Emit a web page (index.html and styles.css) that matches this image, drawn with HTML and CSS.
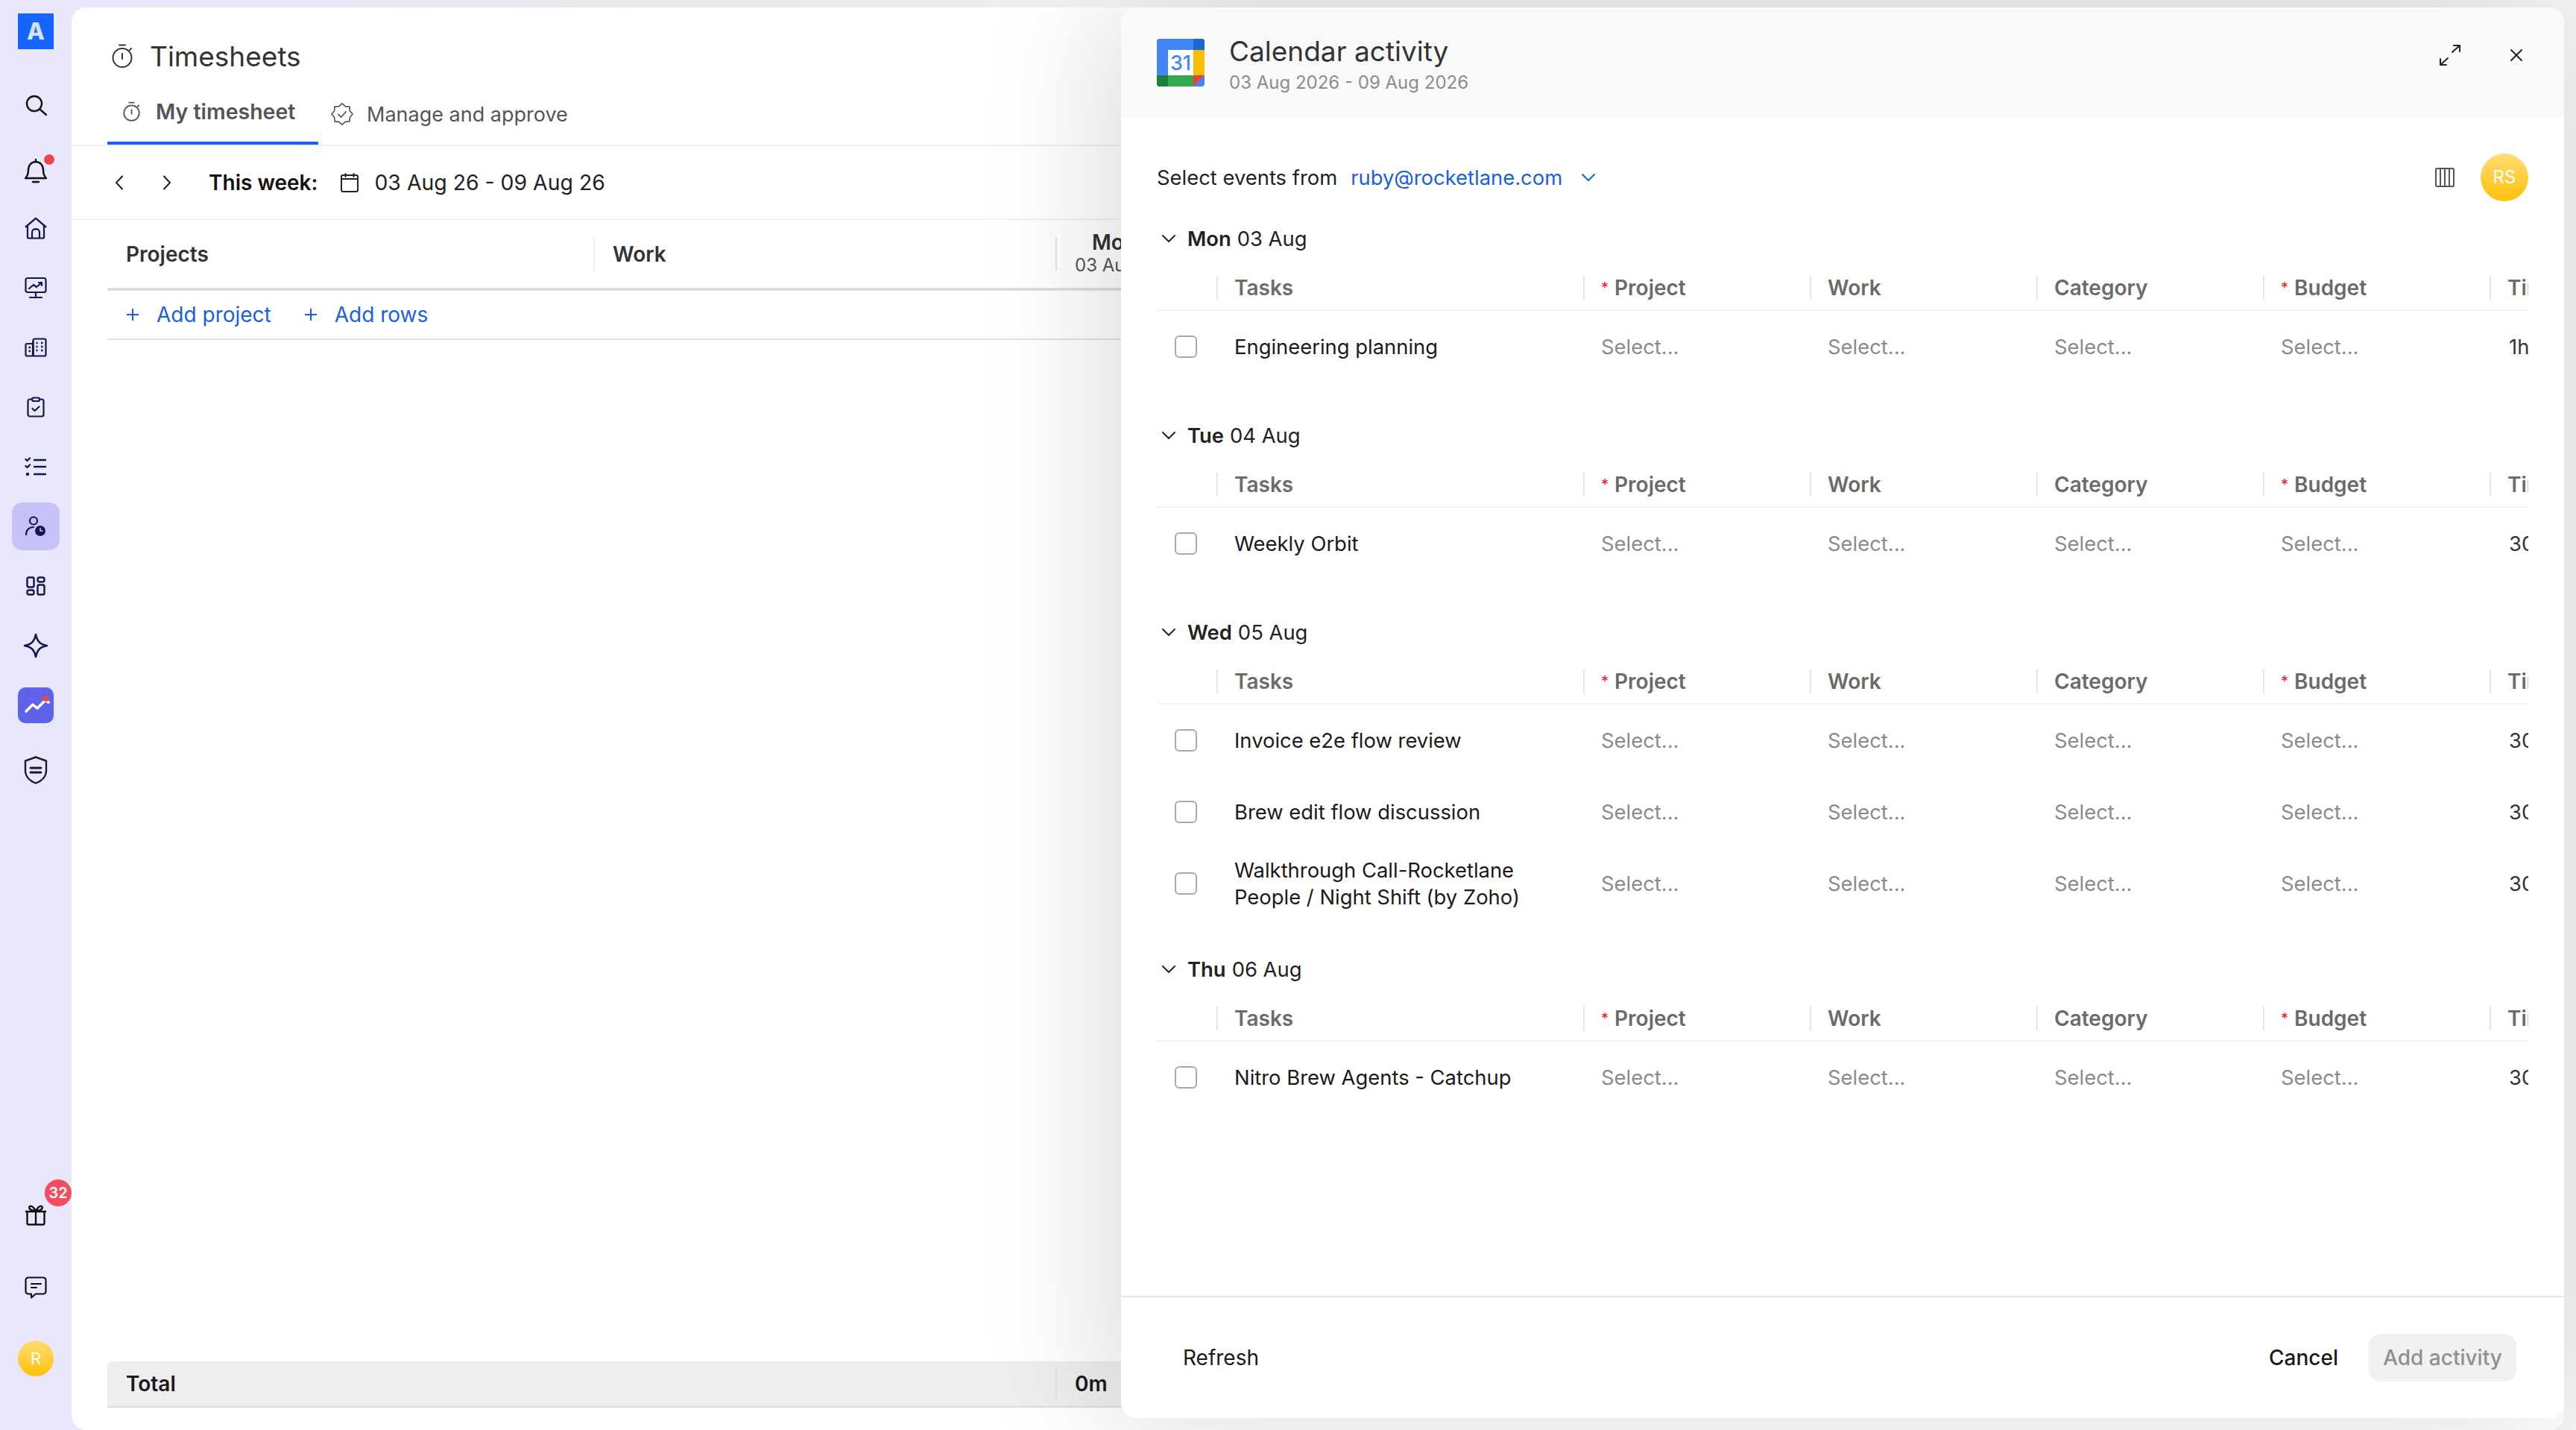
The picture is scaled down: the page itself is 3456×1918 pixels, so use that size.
FILE: index.html
```html
<!DOCTYPE html>
<html lang="en">
<head>
    <meta charset="UTF-8">
    <title>Timesheets</title>
    <link rel="stylesheet" href="styles.css">
</head>
<body>
<div class="app">
    <aside class="sidebar">
        <div class="logo">A</div>
        <div class="nav-item nav-search">
            <svg width="32" height="32" viewBox="0 0 32 32" fill="none" stroke="#111" stroke-width="2.4" stroke-linecap="round"><circle cx="14" cy="14" r="10"/><path d="M22 22l8 7"/></svg>
        </div>
        <div class="nav-item nav-bell">
            <svg width="32" height="34" viewBox="0 0 32 34" fill="none" stroke="#111" stroke-width="2.4" stroke-linejoin="round" stroke-linecap="round"><path d="M2 27c3-3 4-6 4-11 0-6 4-11 10-11s10 5 10 11c0 5 1 8 4 11z"/><path d="M16 2v3M12 32h8"/></svg>
            <span class="dot"></span>
        </div>
        <div class="nav-item nav-home">
            <svg width="30" height="24" viewBox="0 0 30 24" transform="scale(1 1.2)" fill="none" stroke="#16134f" stroke-width="2.2" stroke-linejoin="round"><path d="M1 11L15 1l14 10"/><path d="M4 9v13a1.500 1.500 0 0 0 2 1.500h18a1.500 1.500 0 0 0 2-1.500V9"/><path d="M10 23v-6a4 4 0 0 1 4-4h2a4 4 0 0 1 4 4v6"/></svg>
        </div>
        <div class="nav-item">
            <svg width="30" height="30" viewBox="0 0 30 30" fill="none" stroke="#16134f" stroke-width="2.2" stroke-linecap="round" stroke-linejoin="round"><rect x="1.500" y="2" width="27" height="19" rx="2.500"/><path d="M6 16l6-5 4 3 7-6M19 8h4v4M15 21v7M7 28h16"/></svg>
        </div>
        <div class="nav-item">
            <svg width="30" height="26" viewBox="0 0 30 26" fill="none" stroke="#16134f" stroke-width="2.2" stroke-linejoin="round"><path d="M11 24V7a1.500 1.500 0 0 1 1.500-1.500"/><rect x="1.500" y="8" width="10" height="16.500" rx="2"/><rect x="11.500" y="1.500" width="17" height="23" rx="2"/><path d="M5.500 13h2.500M5.500 18h2.500M15.500 7h2M15.500 12h2M15.500 17h2M22 7h2.500M22 12h2.500M22 17h2.500" stroke-width="2.600"/></svg>
        </div>
        <div class="nav-item">
            <svg width="24" height="28" viewBox="0 0 24 28" fill="none" stroke="#16134f" stroke-width="2.2" stroke-linecap="round" stroke-linejoin="round"><rect x="1.500" y="3.500" width="21" height="23" rx="2.500"/><rect x="7" y="1.500" width="10" height="4.500" rx="2" fill="#e9e7fb"/><path d="M7.500 16l3 3 6-5.500"/></svg>
        </div>
        <div class="nav-item">
            <svg width="30" height="26" viewBox="0 0 30 26" fill="none" stroke="#16134f" stroke-width="2.4" stroke-linecap="round" stroke-linejoin="round"><path d="M1.500 3l2 2 3.500-3.500M1.500 12l2 2 3.500-3.500M13 4h15M13 13h15M13 23h15"/><circle cx="4" cy="23" r="1" fill="#16134f"/></svg>
        </div>
        <div class="nav-item nav-active">
            <svg width="28" height="28" viewBox="0 0 28 28" fill="none" stroke="#16134f" stroke-width="2.200" stroke-linecap="round"><circle cx="11" cy="6.500" r="5"/><path d="M1 25c0-6 4-10 10-10"/><circle cx="20" cy="20" r="7" fill="#16134f" stroke="none"/><path d="M20 16.500V20h3" stroke="#c5c2fa" stroke-width="1.600"/></svg>
        </div>
        <div class="nav-item">
            <svg width="26" height="26" viewBox="0 0 26 26" fill="none" stroke="#16134f" stroke-width="2.400"><rect x="1.500" y="1.500" width="9" height="13" rx="2"/><rect x="15.500" y="1.500" width="9" height="6" rx="2.500"/><rect x="1.500" y="18.500" width="9" height="6" rx="2.500"/><rect x="15.500" y="11.500" width="9" height="13" rx="2"/></svg>
        </div>
        <div class="nav-item">
            <svg width="34" height="34" viewBox="0 0 34 34" fill="none" stroke="#16134f" stroke-width="2.600" stroke-linejoin="round"><path d="M17 2c2 9 5 13 15 15-10 2-13 6-15 15-2-9-5-13-15-15 10-2 13-6 15-15z"/></svg>
        </div>
        <div class="nav-item">
            <div class="chart-tile">
                <svg width="48" height="48" viewBox="0 0 48 48" fill="none"><path d="M11 32l9-9 6 5 11-11 4 3" stroke="#fff" stroke-width="3.500" stroke-linecap="round" stroke-linejoin="round"/><circle cx="37.500" cy="15" r="4" fill="#f0434f"/></svg>
            </div>
        </div>
        <div class="nav-item nav-shield">
            <svg width="32" height="38" viewBox="0 0 32 38" fill="none" stroke="#1a1a2a" stroke-width="2.400" stroke-linejoin="round" stroke-linecap="round"><path d="M16 1.500l14 5v13c0 8-6 14-14 17-8-3-14-9-14-17v-13z"/><path d="M9 16h14M9 22h14" stroke-width="2.800"/></svg>
        </div>

        <div class="nav-item nav-gift">
            <svg width="30" height="28" viewBox="0 0 30 28" fill="none" stroke="#111" stroke-width="2.400" stroke-linejoin="round"><path d="M1 9h28M3.500 9v16a1.500 1.500 0 0 0 1.500 1.500h20a1.500 1.500 0 0 0 1.500-1.500V9M15 8v18"/><path d="M15 8C12 3 9 1 7 2s-1 6 8 6zm0 0c3-5 6-7 8-6s1 6-8 6z"/></svg>
            <span class="badge">32</span>
        </div>
        <div class="nav-item nav-chat">
            <svg width="30" height="30" viewBox="0 0 30 30" fill="none" stroke="#111" stroke-width="2.200" stroke-linejoin="round" stroke-linecap="round"><path d="M5 1.500h20a3.500 3.500 0 0 1 3.500 3.500v15a3.500 3.500 0 0 1-3.500 3.500H15l-6 5v-5H5A3.500 3.500 0 0 1 1.500 20V5A3.500 3.500 0 0 1 5 1.500z"/><path d="M9 10h13M9 15h7"/></svg>
        </div>
        <div class="nav-item nav-user"><span class="avatar avatar-sm">R</span></div>
    </aside>

    <main class="page">
        <div class="page-title">
            <svg width="28" height="32" viewBox="0 0 28 32" fill="none" stroke="#333" stroke-width="2" stroke-linecap="round"><circle cx="14" cy="18.500" r="12.500"/><path d="M10 1.500h8M14 13v7M24 8l2 -2"/></svg>
            <h1>Timesheets</h1>
        </div>
        <div class="tabs">
            <div class="tab tab-active">
                <svg width="23" height="27" viewBox="0 0 28 32" fill="none" stroke="#555" stroke-width="2.200" stroke-linecap="round"><circle cx="14" cy="18.500" r="12.500"/><path d="M10 1.500h8M14 13v7M24 8l2 -2"/></svg>
                My timesheet
            </div>
            <div class="tab">
                <svg width="30" height="32" viewBox="0 0 32 32" fill="none" stroke="#555" stroke-width="1.800" stroke-linejoin="round" stroke-linecap="round"><polygon points="16,1 20.600,4.900 26.600,5.400 27.100,11.400 31,16 27.100,20.600 26.600,26.600 20.600,27.100 16,31 11.400,27.100 5.400,26.600 4.900,20.600 1,16 4.900,11.400 5.400,5.400 11.400,4.900"/><path d="M10.500 16.500l4 4 7-8"/></svg>
                Manage and approve
            </div>
        </div>
        <div class="week-bar">
            <svg class="week-prev" width="12" height="20" viewBox="0 0 12 20" fill="none" stroke="#222" stroke-width="2" stroke-linecap="round" stroke-linejoin="round"><path d="M10 1.500L2 10l8 8.500"/></svg>
            <svg class="week-next" width="12" height="20" viewBox="0 0 12 20" fill="none" stroke="#222" stroke-width="2" stroke-linecap="round" stroke-linejoin="round"><path d="M2 1.500l8 8.500-8 8.500"/></svg>
            <strong class="week-label">This week:</strong>
            <svg width="24" height="26" viewBox="0 0 24 26" fill="none" stroke="#222" stroke-width="2" stroke-linecap="round"><rect x="1" y="3" width="22" height="22" rx="2"/><path d="M1 8h22M6.500 1v4M17.500 1v4"/></svg>
            <span class="week-range">03 Aug 26 - 09 Aug 26</span>
        </div>
        <div class="ts-table">
            <div class="ts-head">
                <div class="ts-col-project">Projects</div>
                <div class="ts-col-work">Work</div>
                <div class="ts-col-day"><b>Mon</b><small>03 Aug</small></div>
            </div>
            <div class="ts-add">
                <span class="add-link"><i class="plus"></i>Add project</span>
                <span class="add-link"><i class="plus"></i>Add rows</span>
            </div>
        </div>
        <div class="ts-total">
            <div class="ts-col-project">Total</div>
            <div class="ts-col-work"></div>
            <div class="ts-col-day">0m</div>
        </div>
    </main>

    <section class="modal">
        <header class="modal-head">
            <svg class="gcal" width="64" height="64" viewBox="0 0 64 64">
                <rect width="64" height="64" rx="4" fill="#4285f4"/>
                <path d="M49 0h11a4 4 0 0 1 4 4v11H49z" fill="#1967d2"/>
                <rect x="49" y="15" width="15" height="34" fill="#fbbc04"/>
                <path d="M15 49h34v15H15z" fill="#34a853"/>
                <path d="M0 49h15v15H4a4 4 0 0 1-4-4z" fill="#188038"/>
                <path d="M49 49h15L49 64z" fill="#ea4335"/>
                <rect x="15" y="15" width="34" height="34" fill="#fff"/>
                <text x="32" y="42" text-anchor="middle" class="gcal-num">31</text>
            </svg>
            <div class="modal-title">
                <h2>Calendar activity</h2>
                <p>03 Aug 2026 - 09 Aug 2026</p>
            </div>
            <svg class="expand" width="30" height="30" viewBox="0 0 30 30" fill="none" stroke="#222" stroke-width="2" stroke-linecap="round" stroke-linejoin="round"><path d="M18 11l10-9M20 2h8v8M12 19L2 28M2 20v8h8"/></svg>
            <svg class="close" width="16" height="16" viewBox="0 0 16 16" fill="none" stroke="#222" stroke-width="2" stroke-linecap="round"><path d="M1 1l14 14M15 1L1 15"/></svg>
        </header>

        <div class="modal-body">
            <div class="toolbar">
                <span>Select events from</span>
                <span class="email">ruby@rocketlane.com</span>
                <svg width="20" height="12" viewBox="0 0 20 12" fill="none" stroke="#1a5fe0" stroke-width="2" stroke-linecap="round" stroke-linejoin="round"><path d="M2 2l8 8 8-8"/></svg>
                <svg class="col-icon" width="26" height="26" viewBox="0 0 26 26" fill="none" stroke="#555" stroke-width="2"><rect x="1" y="1" width="24" height="24" rx="1.500"/><path d="M7 1v24M13 1v24M19 1v24"/></svg>
                <span class="avatar">RS</span>
            </div>

            <div class="day">
                <div class="day-title"><svg width="20" height="12" viewBox="0 0 20 12" fill="none" stroke="#222" stroke-width="2" stroke-linecap="round" stroke-linejoin="round"><path d="M2 2l8 8 8-8"/></svg><b>Mon</b> 03 Aug</div>
                <div class="ev-row ev-head"><div></div><div>Tasks</div><div><i>*</i>Project</div><div>Work</div><div>Category</div><div><i>*</i>Budget</div><div>Time</div></div>
                <div class="ev-row"><div><span class="check"></span></div><div>Engineering planning</div><div>Select...</div><div>Select...</div><div>Select...</div><div>Select...</div><div>1h</div></div>
            </div>

            <div class="day">
                <div class="day-title"><svg width="20" height="12" viewBox="0 0 20 12" fill="none" stroke="#222" stroke-width="2" stroke-linecap="round" stroke-linejoin="round"><path d="M2 2l8 8 8-8"/></svg><b>Tue</b> 04 Aug</div>
                <div class="ev-row ev-head"><div></div><div>Tasks</div><div><i>*</i>Project</div><div>Work</div><div>Category</div><div><i>*</i>Budget</div><div>Time</div></div>
                <div class="ev-row"><div><span class="check"></span></div><div>Weekly Orbit</div><div>Select...</div><div>Select...</div><div>Select...</div><div>Select...</div><div>30m</div></div>
            </div>

            <div class="day day-tight">
                <div class="day-title"><svg width="20" height="12" viewBox="0 0 20 12" fill="none" stroke="#222" stroke-width="2" stroke-linecap="round" stroke-linejoin="round"><path d="M2 2l8 8 8-8"/></svg><b>Wed</b> 05 Aug</div>
                <div class="ev-row ev-head"><div></div><div>Tasks</div><div><i>*</i>Project</div><div>Work</div><div>Category</div><div><i>*</i>Budget</div><div>Time</div></div>
                <div class="ev-row"><div><span class="check"></span></div><div>Invoice e2e flow review</div><div>Select...</div><div>Select...</div><div>Select...</div><div>Select...</div><div>30m</div></div>
                <div class="ev-row"><div><span class="check"></span></div><div>Brew edit flow discussion</div><div>Select...</div><div>Select...</div><div>Select...</div><div>Select...</div><div>30m</div></div>
                <div class="ev-row"><div><span class="check"></span></div><div>Walkthrough Call-Rocketlane<br>People / Night Shift (by Zoho)</div><div>Select...</div><div>Select...</div><div>Select...</div><div>Select...</div><div>30m</div></div>
            </div>

            <div class="day">
                <div class="day-title"><svg width="20" height="12" viewBox="0 0 20 12" fill="none" stroke="#222" stroke-width="2" stroke-linecap="round" stroke-linejoin="round"><path d="M2 2l8 8 8-8"/></svg><b>Thu</b> 06 Aug</div>
                <div class="ev-row ev-head"><div></div><div>Tasks</div><div><i>*</i>Project</div><div>Work</div><div>Category</div><div><i>*</i>Budget</div><div>Time</div></div>
                <div class="ev-row"><div><span class="check"></span></div><div>Nitro Brew Agents - Catchup</div><div>Select...</div><div>Select...</div><div>Select...</div><div>Select...</div><div>30m</div></div>
            </div>
        </div>

        <footer class="modal-foot">
            <span class="refresh">Refresh</span>
            <span class="cancel">Cancel</span>
            <span class="add-activity">Add activity</span>
        </footer>
    </section>
</div>
</body>
</html>
```
FILE: styles.css
```css
* {
    box-sizing: border-box;
}

html, body {
    margin: 0;
    height: 100%;
    overflow: hidden;
}

body {
    font-family: Inter, "Noto Sans", sans-serif;
    font-size: 28px;
    color: #1a1a1a;
    background: linear-gradient(90deg, #e9e7fb 0, #e9e7fb 160px, #e9e9ec 800px, #ececec 1300px, #f5f5f5 1500px);
}

.app {
    position: relative;
    display: flex;
    height: 1918px;
    padding-right: 16px;
}

/* Sidebar */
.sidebar {
    flex: 0 0 96px;
    display: flex;
    flex-direction: column;
    align-items: center;
    padding: 18px 0 56px;
    background: #e9e7fb;
}

.logo {
    width: 48px;
    height: 48px;
    background: #1565ff;
    font-size: 31px;
    font-weight: 800;
    line-height: 48px;
    text-align: center;
    color: #d3e1ff;
}

.nav-item {
    position: relative;
    flex: none;
    width: 64px;
    height: 80px;
    display: flex;
    align-items: center;
    justify-content: center;
}

.nav-search { margin-top: 35px; }
.nav-bell { margin-top: 8px; }
.nav-home { margin-top: -3px; }
.nav-shield { margin-top: 7px; }
.nav-gift { margin-top: auto; }
.nav-chat { margin-top: 17px; }
.nav-user { margin-top: 15px; }

.nav-active {
    height: 64px;
    margin: 8px 0;
    background: #c5c2fa;
    border-radius: 14px;
}

.dot {
    position: absolute;
    left: 42px;
    top: 17px;
    width: 14px;
    height: 14px;
    background: #f0434f;
    border: 1px solid #fff;
    border-radius: 50%;
    box-sizing: content-box;
}

.chart-tile {
    width: 48px;
    height: 48px;
    background: #5f63ea;
    border-radius: 10px;
}

.badge {
    position: absolute;
    left: 44px;
    top: -8px;
    width: 36px;
    height: 36px;
    background: #f44e5e;
    border-radius: 50%;
    color: #fff;
    font-size: 20px;
    font-weight: 600;
    line-height: 36px;
    text-align: center;
}

.avatar {
    width: 64px;
    height: 64px;
    border-radius: 50%;
    background: linear-gradient(180deg, #ffdc74, #ffc107);
    color: #fff;
    font-size: 24px;
    line-height: 64px;
    text-align: center;
}

.avatar-sm {
    width: 48px;
    height: 48px;
    font-size: 22px;
    line-height: 48px;
}

/* Timesheet page */
.page {
    flex: 1;
    display: flex;
    flex-direction: column;
    margin-top: 10px;
    padding: 0 48px 30px;
    background: #fff;
    border-radius: 20px;
}

.page-title {
    display: flex;
    align-items: center;
    gap: 23px;
    height: 66px;
    margin-top: 32px;
    padding-left: 6px;
}

.page-title h1 {
    margin: 0;
    font-size: 37px;
    font-weight: 400;
    color: #333;
}

.tabs {
    display: flex;
    align-items: flex-start;
    height: 88px;
    margin: 0 -48px;
    padding: 0 48px;
    border-bottom: 2px solid #f0f0f0;
}

.tab {
    display: flex;
    align-items: center;
    gap: 18px;
    height: 86px;
    padding: 4px 17px 0;
    color: #555;
    font-size: 27px;
}

.tab-active {
    gap: 21px;
    width: 283px;
    padding: 0 0 0 21px;
    border-bottom: 4px solid #1560f0;
    font-size: 28.500px;
    font-weight: 600;
}

.week-bar {
    display: flex;
    align-items: center;
    height: 99px;
    margin: 0 -48px;
    padding: 0 48px 0 58px;
    border-bottom: 2px solid #f2f2f2;
}

.week-next { margin-left: 52px; }
.week-label { margin-left: 50px; margin-right: 31px; font-weight: 600; color: #111; }
.week-range { margin-left: 21px; font-size: 28.400px; color: #222; }

.ts-head,
.ts-total {
    display: flex;
    align-items: center;
    font-weight: 600;
}

.ts-head {
    height: 95px;
    border-bottom: 4px solid #dedede;
    color: #333;
}

.ts-col-project {
    flex: 0 0 652px;
    padding-left: 25px;
}

.ts-col-work {
    flex: 0 0 620px;
    height: 44px;
    padding-left: 24px;
    line-height: 44px;
    border-left: 2px solid #eee;
}

.ts-col-day {
    flex: 1;
    height: 44px;
    padding-left: 24px;
    line-height: 44px;
    border-left: 2px solid #e4e4e4;
}

.ts-head .ts-col-day b {
    display: block;
    padding-left: 23px;
    font-weight: 600;
    line-height: 28px;
    margin-top: -8px;
}

.ts-head .ts-col-day small {
    display: block;
    font-size: 24px;
    font-weight: 400;
    line-height: 34px;
    color: #555;
}

.ts-add {
    display: flex;
    align-items: center;
    gap: 45px;
    height: 66px;
    padding-left: 26px;
    border-bottom: 2px solid #e2e2e2;
}

.add-link {
    display: flex;
    align-items: center;
    gap: 24px;
    color: #1a5fe0;
}

.plus {
    position: relative;
    width: 16px;
    height: 16px;
    background:
        linear-gradient(#1a5fe0, #1a5fe0) center / 100% 2px no-repeat,
        linear-gradient(#1a5fe0, #1a5fe0) center / 2px 100% no-repeat;
}

.ts-total {
    height: 62px;
    margin-top: auto;
    background: #eeeef0;
    border-bottom: 2px solid #dcdcde;
    border-radius: 6px 6px 0 0;
}

/* Calendar activity panel */
.modal {
    position: absolute;
    left: 1504px;
    top: 10px;
    width: 1936px;
    height: 1892px;
    display: flex;
    flex-direction: column;
    background: #fff;
    border-radius: 20px;
    box-shadow: -20px 0 170px rgba(0, 0, 0, 0.15);
}

.modal-head {
    flex: 0 0 148px;
    display: flex;
    align-items: center;
    padding: 0 56px 0 48px;
    background: #f9f9f9;
    border-radius: 20px 20px 0 0;
}

.gcal-num {
    font-family: Inter, sans-serif;
    font-size: 27px;
    font-weight: 500;
    fill: #4285f4;
}

.modal-title {
    flex: 1;
    margin: 4px 0 0 33px;
}

.modal-title h2 {
    margin: 0;
    font-size: 37px;
    font-weight: 400;
    line-height: 48px;
    color: #333;
}

.modal-title p {
    margin: 2px 0 0;
    font-size: 24px;
    line-height: 32px;
    color: #8c8c8c;
}

.expand,
.close {
    margin-bottom: 21px;
}

.close { margin-left: 66px; }

.modal-body {
    flex: 1;
    padding: 48px 48px 0;
    overflow: hidden;
    font-size: 27.400px;
}

.toolbar {
    display: flex;
    align-items: center;
    height: 64px;
    margin-bottom: 30px;
    color: #222;
}

.email {
    margin: 0 25px 0 18px;
    color: #1a5fe0;
}

.col-icon { margin-left: auto; margin-right: 35px; }

.day + .day { margin-top: 51px; }
.day-tight { margin-bottom: -4px; }

.day-title {
    display: flex;
    align-items: center;
    gap: 8px;
    height: 40px;
    padding-left: 6px;
    color: #222;
}

.day-title svg { margin-right: 7px; }
.day-title b { font-weight: 600; }

.ev-row {
    display: grid;
    grid-template-columns: 80px 492px repeat(4, 304px) 52px;
    align-items: center;
    height: 96px;
    line-height: 36px;
}

.ev-row > div {
    padding-left: 24px;
    white-space: nowrap;
    overflow: hidden;
}

.ev-row > div:nth-child(n+3) {
    color: #8a8a8a;
}

.ev-row > div:last-child {
    padding-left: 26px;
    color: #333;
}

.ev-row > div:first-child {
    display: flex;
    padding-left: 24px;
}

.ev-head {
    height: 47px;
    margin-top: 30px;
    align-items: start;
    border-bottom: 2px solid #f2f2f2;
    font-size: 28px;
    font-weight: 600;
    line-height: 32px;
}

.ev-head > div,
.ev-head > div:nth-child(n+3),
.ev-head > div:last-child {
    height: 32px;
    padding-left: 22px;
    color: #6b6b6b;
    border-left: 2px solid #e6e6e6;
}

.ev-head > div:first-child {
    border-left: 0;
}

.ev-head i {
    margin-right: 8px;
    font-size: 20px;
    font-style: normal;
    font-weight: 400;
    vertical-align: 3px;
    color: #e0202c;
}

.check {
    width: 30px;
    height: 30px;
    border: 2px solid #aaa;
    border-radius: 6px;
    background: #fff;
}

.modal-foot {
    flex: 0 0 164px;
    display: flex;
    align-items: center;
    padding: 0 64px 0 83px;
    border-top: 2px solid #e4e4e4;
    color: #1a1a1a;
}

.refresh { flex: 1; }

.cancel {
    margin-right: 41px;
    font-weight: 500;
}

.add-activity {
    width: 198px;
    height: 64px;
    background: #f1f1f1;
    border-radius: 16px;
    color: #8f8f8f;
    font-weight: 500;
    line-height: 64px;
    text-align: center;
}
```
